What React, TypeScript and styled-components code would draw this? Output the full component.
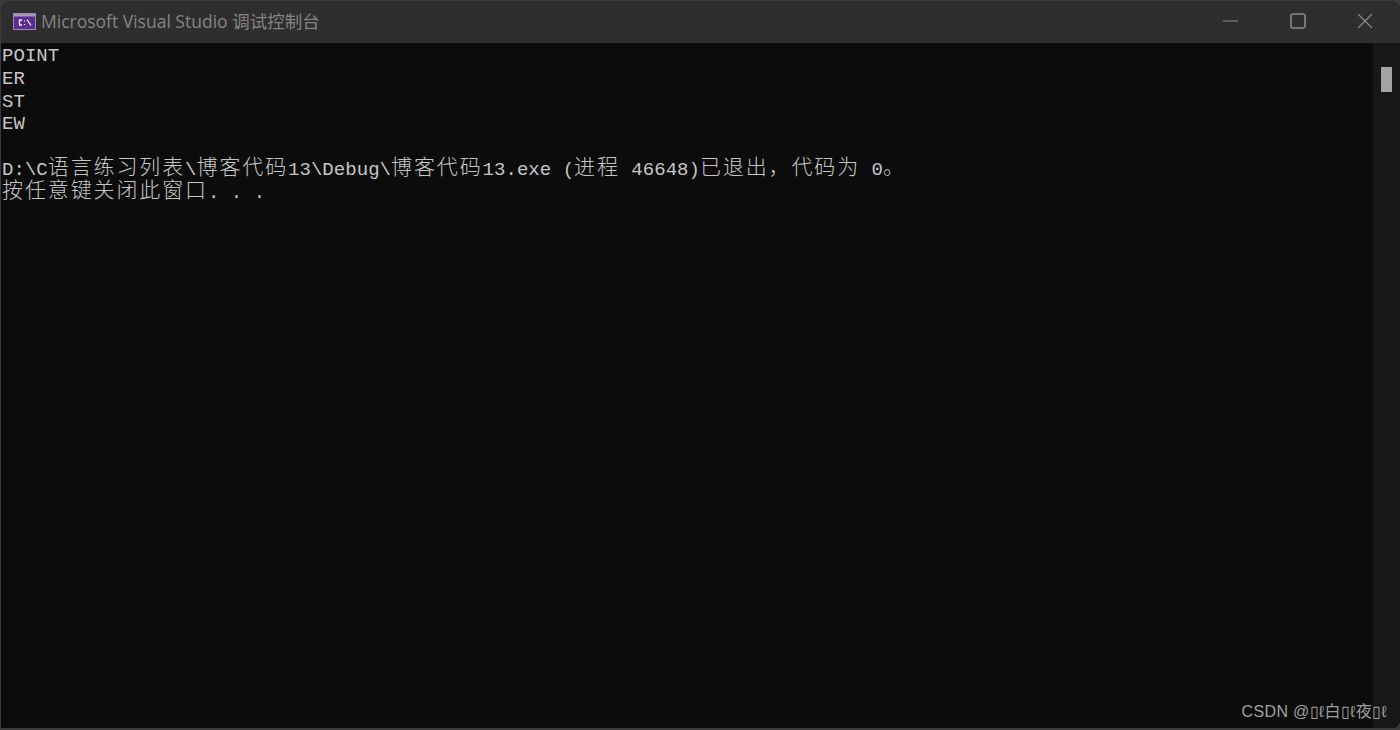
import React from "react";
import styled, { createGlobalStyle } from "styled-components";

const Global = createGlobalStyle`
  html, body { margin: 0; padding: 0; background: #3a3a3a; }
  body { width: 1400px; height: 730px; overflow: hidden; }
`;

const Win = styled.div`
  position: relative;
  box-sizing: border-box;
  width: 1400px;
  height: 730px;
  background: #3b3b3b;
  padding: 1px 0 2px 1px;
`;
const Frame = styled.div`
  display: flex;
  flex-direction: column;
  height: 100%;
  border-radius: 9px 9px 8px 0;
  overflow: hidden;
  background: #0c0c0c;
`;
const TitleBar = styled.header`
  display: flex;
  align-items: center;
  box-sizing: border-box;
  height: 42px;
  flex: none;
  background: #2e2e2e;
  padding: 0 0 2px 12px;
`;
const Title = styled.span`
  margin-left: 5px;
  font: 17.5px/20px "Open Sans", "Noto Sans CJK SC", sans-serif;
  color: #848484;
  flex: 1;
  white-space: nowrap;
`;
const Controls = styled.div`
  display: flex;
  align-items: center;
  padding-right: 2px;
  color: #8a8a8a;
`;
const Ctl = styled.span`
  display: flex;
  align-items: center;
  justify-content: center;
  width: 67px;
  height: 40px;
`;
const Body = styled.main`
  flex: 1;
  display: flex;
  min-height: 0;
`;
const Console = styled.pre`
  flex: 1;
  margin: 0;
  padding: 2px 0 0 1px;
  color: #c6c6c6;
  font: 19px/22.8px "Liberation Mono", monospace;
  letter-spacing: 0.04px;
  white-space: pre;
`;
const Line = styled.div`
  height: 22.8px;
`;
const Cjk = styled.span`
  font-family: "Noto Sans CJK SC", sans-serif;
  font-weight: 300;
  font-size: 21px;
  line-height: 0;
  letter-spacing: 1.88px;
  vertical-align: 1px;
`;
const ScrollTrack = styled.aside`
  width: 27px;
  flex: none;
  background: #171717;
  padding: 24px 0 0 8px;
  box-sizing: border-box;
`;
const Thumb = styled.div`
  width: 11px;
  height: 25px;
  background: #a3a3a3;
`;
const Mark = styled.span`
  position: absolute;
  right: 13px;
  bottom: 8px;
  font: 16px/20px "Liberation Sans", "Noto Sans CJK SC", sans-serif;
  letter-spacing: 0.35px;
  color: #a0a0a0;
`;

const lines = [
  "POINT",
  "ER",
  "ST",
  "EW",
  "",
  "D:\\C语言练习列表\\博客代码13\\Debug\\博客代码13.exe (进程 46648)已退出，代码为 0。",
  "按任意键关闭此窗口. . .",
];

const Text = ({ s }: { s: string }) => (
  <Line>
    {s.split(/([\u3000-\u9fff\uff00-\uffef]+)/).map((part, i) =>
      i % 2 ? <Cjk key={i}>{part}</Cjk> : part
    )}
  </Line>
);

export default function App() {
  return (
    <Win>
      <Global />
      <Frame>
        <TitleBar>
          <svg width="23" height="17" viewBox="0 0 23 17">
            <rect x="0.5" y="0.5" width="22" height="16" fill="#5c2d91" stroke="#9b88b5" />
            <rect x="1" y="1" width="21" height="2.5" fill="#a79bb8" />
            <path d="M9 7H6.5V12H9M11.5 7.5V8.5M11.5 11V12M14 6.5L18 12.5" fill="none" stroke="#eee" strokeWidth="1.3" />
          </svg>
          <Title>Microsoft Visual Studio 调试控制台</Title>
          <Controls>
            <Ctl>
              <svg width="15" height="2" viewBox="0 0 15 2"><path d="M0 1H15" stroke="currentColor" strokeWidth="1" /></svg>
            </Ctl>
            <Ctl>
              <svg width="16" height="16" viewBox="0 0 16 16"><rect x="1" y="1" width="14" height="14" rx="2" fill="none" stroke="currentColor" strokeWidth="1.6" /></svg>
            </Ctl>
            <Ctl>
              <svg width="16" height="16" viewBox="0 0 16 16"><path d="M1 1L15 15M15 1L1 15" stroke="currentColor" strokeWidth="1.2" /></svg>
            </Ctl>
          </Controls>
        </TitleBar>
        <Body>
          <Console>
            {lines.map((s, i) => (
              <Text key={i} s={s} />
            ))}
          </Console>
          <ScrollTrack>
            <Thumb />
          </ScrollTrack>
        </Body>
      </Frame>
      <Mark>CSDN @▯ℓ白▯ℓ夜▯ℓ</Mark>
    </Win>
  );
}
